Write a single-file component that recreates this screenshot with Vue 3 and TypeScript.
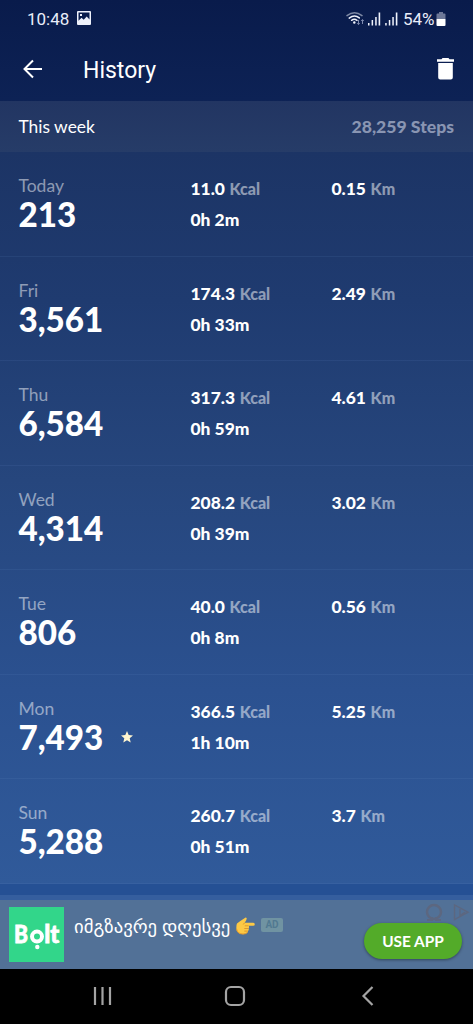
<script setup lang="ts">
interface Day {
  name: string
  steps: string
  kcal: string
  time: string
  km: string
  best?: boolean
}

const days: Day[] = [
  { name: 'Today', steps: '213', kcal: '11.0', time: '0h 2m', km: '0.15' },
  { name: 'Fri', steps: '3,561', kcal: '174.3', time: '0h 33m', km: '2.49' },
  { name: 'Thu', steps: '6,584', kcal: '317.3', time: '0h 59m', km: '4.61' },
  { name: 'Wed', steps: '4,314', kcal: '208.2', time: '0h 39m', km: '3.02' },
  { name: 'Tue', steps: '806', kcal: '40.0', time: '0h 8m', km: '0.56' },
  { name: 'Mon', steps: '7,493', kcal: '366.5', time: '1h 10m', km: '5.25', best: true },
  { name: 'Sun', steps: '5,288', kcal: '260.7', time: '0h 51m', km: '3.7' },
]
</script>

<template>
  <div class="screen">
    <div class="status">
      <span class="clock">10:48</span>
      <svg class="picture" width="14" height="14" viewBox="0 0 14 14">
        <path fill-rule="evenodd" fill="#eef1fb" d="M1 0h12a1 1 0 0 1 1 1v12a1 1 0 0 1-1 1H1a1 1 0 0 1-1-1V1a1 1 0 0 1 1-1zM1.500 1.500v8.300l3-3 2.200 2 3-3.300 2.800 3V1.500zM3 3h2v2H3z" />
      </svg>
      <svg class="signals" width="52" height="16" viewBox="0 0 52 16">
        <g fill="none" stroke-linecap="round" stroke="#f0f3fc">
          <path d="M1 4.600Q8.500-1.200 16 4.600" stroke-width="1.500" opacity=".5" />
          <path d="M3.200 7.100Q8.500 2.900 13.300 6.900" stroke-width="1.500" />
          <path d="M5.600 9.300Q8.300 7.300 11 9.300" stroke-width="1.500" />
        </g>
        <circle cx="8.300" cy="11.500" r="1.200" fill="#f0f3fc" />
        <path d="M12.500 9v4.500M11.200 12.200l1.300 1.400 1.300-1.400M16.500 13V8.700M15.200 10l1.300-1.400 1.300 1.400" fill="none" stroke="#7f8bb0" />
        <g fill="#f0f3fc">
          <path d="M22 12h1.500v2.500H22zM25.600 9h1.500v5.500h-1.500zM29.200 6h1.500v8.500h-1.500zM32.600 1.500h1.600v13h-1.600z" />
          <path d="M39.200 12h1.500v2.500h-1.500zM42.800 9h1.500v5.500h-1.500zM46.300 6h1.500v8.500h-1.500zM49.800 1.500h1.600v13h-1.600z" />
        </g>
      </svg>
      <span class="percent">54%</span>
      <svg class="battery" width="10" height="15" viewBox="0 0 10 15">
        <path d="M3 0h4v1.500h1.500a1 1 0 0 1 1 1V7h-9V2.500a1 1 0 0 1 1-1H3z" fill="#6d7898" />
        <path d="M.5 7h9v6a1 1 0 0 1-1 1h-7a1 1 0 0 1-1-1z" fill="#fff" />
      </svg>
    </div>

    <header class="bar">
      <svg class="back" width="20" height="20" viewBox="0 0 20 20">
        <path d="M19 10H1.500M10 1.500L1.500 10l8.500 8.500" fill="none" stroke="#fff" stroke-width="2" />
      </svg>
      <h1>History</h1>
      <svg class="trash" width="17" height="22" viewBox="0 0 17 22">
        <path d="M0 1.200h4.500L5.500 0h6l1 1.200H17v2.500H0zM1.200 4.900h14.600v14.600a2 2 0 0 1-2 2H3.200a2 2 0 0 1-2-2z" fill="#fff" />
      </svg>
    </header>

    <div class="week">
      <span>This week</span>
      <b>28,259 Steps</b>
    </div>

    <main>
      <section v-for="day in days" :key="day.name" class="day">
        <div class="total">
          <div class="name">{{ day.name }}</div>
          <div class="steps">
            <span>{{ day.steps }}</span>
            <svg v-if="day.best" class="star" width="12" height="12" viewBox="0 0 12 12">
              <path d="M6 0l1.700 4 4.300.4-3.300 2.900 1 4.300L6 9.300l-3.700 2.300 1-4.300L0 4.400 4.300 4z" fill="#fff5cf" />
            </svg>
          </div>
        </div>
        <div class="effort">
          <div class="metric">{{ day.kcal }} <span>Kcal</span></div>
          <div class="metric">{{ day.time }}</div>
        </div>
        <div class="metric">{{ day.km }} <span>Km</span></div>
      </section>
    </main>

    <div class="gap"></div>

    <aside class="ad">
      <svg class="logo" width="55" height="55" viewBox="0 0 55 55">
        <rect width="55" height="55" fill="#32d68a" />
        <text x="5" y="36" class="brand" textLength="14" lengthAdjust="spacingAndGlyphs">B</text>
        <circle cx="28" cy="29.600" r="5" fill="none" stroke="#fff" stroke-width="4" />
        <circle cx="28.300" cy="40" r="2.200" fill="#fff" />
        <text x="35.300" y="36" class="brand" textLength="15" lengthAdjust="spacingAndGlyphs">lt</text>
      </svg>
      <div class="pitch">
        <span>იმგზავრე დღესვე</span>
        <svg class="hand" width="19" height="18" viewBox="0 0 19 18">
          <path d="M1 6.500Q4 4 8.500 1.200Q10-.2 10.700 1.200Q11 2.600 8.700 5.700H17.300Q18.800 5.900 18.800 7.200Q18.800 8.700 17.200 8.800H12.500Q13.700 10 12.500 11.400Q13.300 12.900 12 14Q12.200 15.500 10.700 16.100Q9 17.500 5.500 17Q.6 16.300.4 11.500Q.2 8 1 6.500z" fill="#fdc945" />
          <path d="M8.800 8.800h3.700M8.300 11.500h4.100M8.300 14.100h3.600M8.700 5.700L7.200 7.500" fill="none" stroke="#d78b27" stroke-width=".8" />
          <path d="M.6 12Q1.500 17 7 17Q10 17 11.500 15.500" fill="none" stroke="#e39a2e" />
        </svg>
        <i>AD</i>
      </div>
      <svg class="choices" width="48" height="20" viewBox="0 0 48 20">
        <g fill="none" stroke="#5c6780">
          <circle cx="9" cy="9" r="7" stroke-width="2.500" />
          <path d="M2 17h5v-3M16 17h-5v-3" stroke-width="2" />
          <path d="M29.500 2v14.500L43 9.200zM35 6v6.500l5-3.300" stroke-width="1.400" />
        </g>
      </svg>
      <button type="button">USE APP</button>
    </aside>

    <nav>
      <svg width="473" height="55" viewBox="0 0 473 55">
        <g fill="none" stroke="#a4a4a4" stroke-width="2.200">
          <path d="M95 18v18M102.500 18v18M110 18v18" />
          <rect x="226" y="18" width="18" height="18" rx="5" />
          <path d="M372.500 18l-9 9 9 9" />
        </g>
      </svg>
    </nav>
  </div>
</template>

<style>
body {
  margin: 0;
  background: #000;
}
</style>

<style scoped>
.screen {
  width: 473px;
  height: 1024px;
  overflow: hidden;
  display: flex;
  flex-direction: column;
  color: #fff;
  font-family: Lato, sans-serif;
  background: linear-gradient(#091b4b 0, #0d2255 100px, #1c3465 152px, #1f3b70 300px, #26467d 480px, #2b5190 690px, #305a9a 884px);
}
.status {
  height: 38px;
  box-sizing: border-box;
  padding-left: 27px;
  display: flex;
  align-items: center;
  font: 17px Roboto, sans-serif;
  color: #e9edf9;
}
.clock { width: 50px; }
.picture { margin-top: -2px; }
.signals { margin-left: 255px; }
.percent { margin-left: 5px; width: 33px; font-size: 17px; }
.bar {
  height: 63px;
  display: flex;
  align-items: center;
  padding: 0 19px 0 23px;
}
.back { margin-top: -2px; }
.bar h1 {
  flex: 1;
  margin: 1px 0 0 40px;
  font: 400 23px Roboto, sans-serif;
}
.trash { margin-top: -2px; }
.week {
  height: 51px;
  box-sizing: border-box;
  flex: none;
  display: flex;
  align-items: center;
  justify-content: space-between;
  padding: 0 19px 1px 18.500px;
  background: linear-gradient(#223562, #263c68);
  font-size: 17.400px;
}
.week b { color: #8995b2; font-weight: 900; font-size: 17.600px; }
main { height: 732px; flex: none; display: flex; flex-direction: column; }
.day {
  flex: 1;
  box-sizing: border-box;
  border-bottom: 1px solid #7199dc1a;
  display: grid;
  grid-template-columns: 172px 141px 1fr;
  padding: 23px 0 0 18.500px;
}
.name { font-size: 17.500px; line-height: 21px; color: #ffffff80; }
.steps {
  display: flex;
  align-items: center;
  font-size: 33.200px;
  line-height: 36px;
  font-weight: 900;
}
.star { margin: 1px 0 0 18px; }
.metric { font-size: 17.400px; line-height: 31px; margin-top: -2px; font-weight: 900; }
.effort .metric + .metric { margin-top: 0; }
.metric span { margin-left: 0.500px; color: #ffffff80; font-size: 16px; }
.gap {
  height: 16px;
  flex: none;
  background: linear-gradient(#255094 0 11px, #355e9e 11px);
}
.ad {
  position: relative;
  height: 69px;
  flex: none;
  display: flex;
  background: #527197;
}
.logo { margin: 7px 0 0 9px; }
.brand { font: 900 25px Lato, sans-serif; fill: #fff; stroke: #fff; stroke-width: .8px; }
.pitch {
  height: 52px;
  margin-left: 10px;
  display: flex;
  align-items: center;
  font: 18.700px "Noto Sans", "DejaVu Sans", sans-serif;
}
.pitch span { width: 162px; margin-top: -1px; white-space: nowrap; }
.pitch i {
  margin: -2px 0 0 6px;
  width: 22px;
  height: 14px;
  border-radius: 2px;
  background: #7093a2;
  color: #527991;
  font: 700 10px/14px Roboto, sans-serif;
  text-align: center;
}
.choices { position: absolute; right: 0; top: 3px; }
.ad button {
  position: absolute;
  right: 11px;
  top: 23px;
  width: 98px;
  height: 36px;
  padding: 0;
  border: 0;
  border-radius: 18px;
  background: #53ab29;
  box-shadow: 0 1px 3px #0006;
  color: #fff;
  font: 700 15.400px Lato, sans-serif;
}
nav { height: 55px; flex: none; background: #000; }
nav svg { display: block; }
</style>
